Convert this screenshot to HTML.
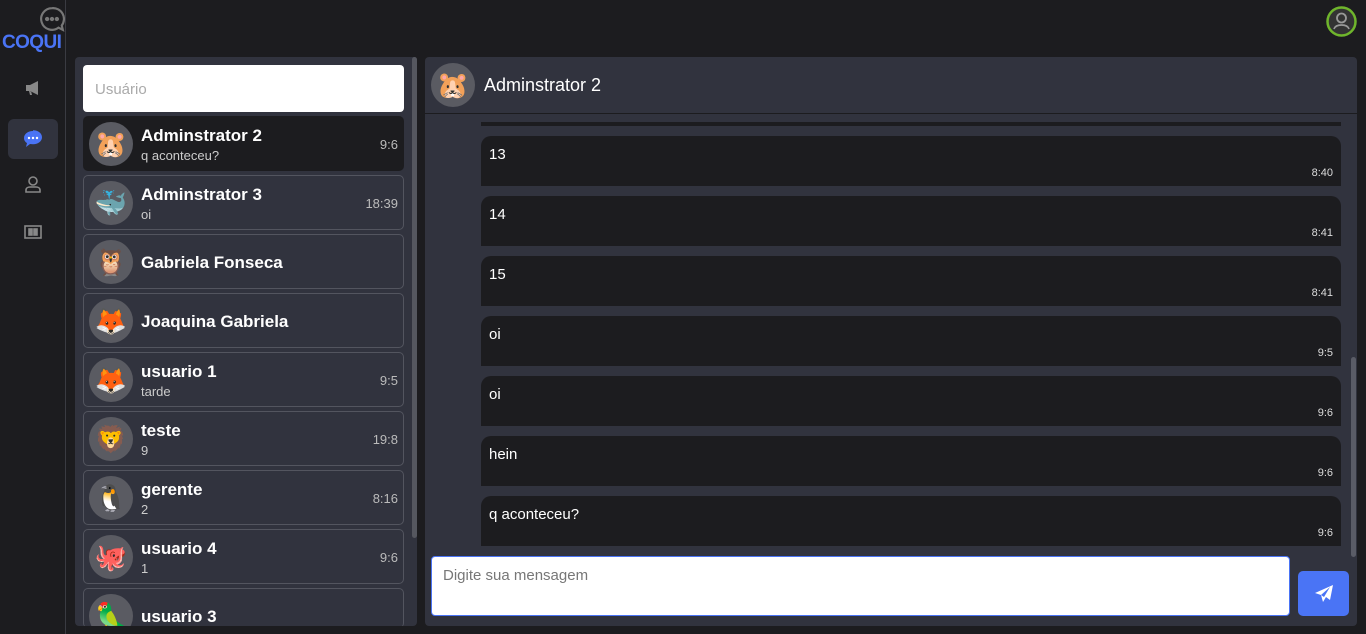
<!DOCTYPE html>
<html><head><style>
*{box-sizing:border-box;margin:0;padding:0}
body{width:1366px;height:634px;background:#1c1c1f;font-family:"Liberation Sans",sans-serif;position:relative;overflow:hidden;color:#fff}
.side{position:absolute;left:0;top:0;width:66px;height:634px;border-right:1px solid #3a3b42}
.logo{position:absolute;left:2px;top:32px;color:#4a74f5;font-weight:bold;font-size:19px;letter-spacing:-0.6px}
.nav{position:absolute;left:8px;width:50px;height:40px;display:flex;align-items:center;justify-content:center}
.panel{position:absolute;background:#31333e;border-radius:4px}
.search{position:absolute;left:83px;top:65px;width:321px;height:47px;background:#fff;border-radius:4px;color:#aaa;font-size:15px;padding:16px 12px}
.row{position:absolute;left:83px;width:321px;height:55px;border:1px solid #53555f;border-radius:5px}
.row.sel{background:#1c1c1f;border-color:#1c1c1f}
.av{position:absolute;left:5px;top:5px;width:44px;height:44px;border-radius:50%;background:#5a5b62;display:flex;align-items:center;justify-content:center;font-size:26px}
.nm{position:absolute;left:57px;top:9px;font-weight:bold;font-size:17px}
.nm.c{top:18px}
.sub{position:absolute;left:57px;top:31px;font-size:13px;color:#ccc}
.tm{position:absolute;right:5px;top:20px;font-size:13px;color:#bbb}
.msg{position:absolute;left:481px;width:860px;height:50px;background:#1c1c1f;border-radius:10px 10px 0 0;font-size:15px;padding:10px 8px}
.msg span{position:absolute;right:8px;bottom:7px;font-size:11px;color:#ddd}
</style></head><body>
<div class="side">
<svg style="position:absolute;left:39px;top:6px" width="26" height="26" viewBox="0 0 24 24" fill="none" stroke="#777" stroke-width="2"><path d="M12 2a10 10 0 1 0 6 18l4 2-1-4A10 10 0 0 0 12 2z"/><circle cx="7.5" cy="12" r="1" fill="#777"/><circle cx="12" cy="12" r="1" fill="#777"/><circle cx="16.5" cy="12" r="1" fill="#777"/></svg>
<div class="logo">COQUI</div>
<div class="nav" style="top:68px"><svg width="18" height="16" viewBox="0 0 18 16"><path d="M2 5h4l8-4v14l-8-4H2z M5 11l1 4h2l-1-4" fill="#888"/></svg></div>
<div class="nav" style="top:119px;background:#31333e;border-radius:6px"><svg width="20" height="18" viewBox="0 0 20 18"><path d="M10 1C5 1 1 4 1 8c0 2 1 4 3 5l-1 4 4-3c1 0 2 .3 3 .3 5 0 9-3 9-7s-4-7-9-7z" fill="#4a74f5"/><circle cx="6" cy="8" r="1.2" fill="#fff"/><circle cx="10" cy="8" r="1.2" fill="#fff"/><circle cx="14" cy="8" r="1.2" fill="#fff"/></svg></div>
<div class="nav" style="top:164px"><svg width="18" height="18" viewBox="0 0 18 18" fill="none" stroke="#888" stroke-width="1.6"><circle cx="9" cy="6" r="4"/><path d="M2 17v-2c0-2 2-3 4-3h6c2 0 4 1 4 3v2z"/></svg></div>
<div class="nav" style="top:212px"><svg width="18" height="14" viewBox="0 0 18 14" fill="none" stroke="#888" stroke-width="1.6"><rect x="1" y="1" width="16" height="12"/><rect x="5" y="4" width="3" height="6" fill="#888"/><rect x="10" y="4" width="3" height="6" fill="#888"/></svg></div>
</div>
<svg style="position:absolute;left:1326px;top:6px" width="31" height="31" viewBox="0 0 31 31"><circle cx="15.5" cy="15.5" r="14" fill="#333" stroke="#6fb52c" stroke-width="2.5"/><circle cx="15.5" cy="12" r="4.5" fill="none" stroke="#999" stroke-width="1.8"/><path d="M8 23c1-3 4-4 7.5-4s6.5 1 7.5 4" fill="none" stroke="#999" stroke-width="1.8"/></svg>

<div class="panel" style="left:75px;top:57px;width:342px;height:569px"></div>
<div style="position:absolute;left:412px;top:57px;width:5px;height:481px;background:#55575f;border-radius:3px"></div>
<div class="search">Usuário</div>
<div class="row sel" style="top:116px"><div class="av">🐹</div><div class="nm">Adminstrator 2</div><div class="sub">q aconteceu?</div><div class="tm">9:6</div></div>
<div class="row" style="top:175px"><div class="av">🐳</div><div class="nm">Adminstrator 3</div><div class="sub">oi</div><div class="tm">18:39</div></div>
<div class="row" style="top:234px"><div class="av">🦉</div><div class="nm c">Gabriela Fonseca</div></div>
<div class="row" style="top:293px"><div class="av">🦊</div><div class="nm c">Joaquina Gabriela</div></div>
<div class="row" style="top:352px"><div class="av">🦊</div><div class="nm">usuario 1</div><div class="sub">tarde</div><div class="tm">9:5</div></div>
<div class="row" style="top:411px"><div class="av">🦁</div><div class="nm">teste</div><div class="sub">9</div><div class="tm">19:8</div></div>
<div class="row" style="top:470px"><div class="av">🐧</div><div class="nm">gerente</div><div class="sub">2</div><div class="tm">8:16</div></div>
<div class="row" style="top:529px"><div class="av">🐙</div><div class="nm">usuario 4</div><div class="sub">1</div><div class="tm">9:6</div></div>
<div class="row" style="top:588px;height:40px;border-bottom:none;overflow:hidden"><div class="av">🦜</div><div class="nm" style="top:18px">usuario 3</div></div>
<div style="position:absolute;left:75px;top:626px;width:342px;height:8px;background:#1c1c1f"></div>

<div class="panel" style="left:425px;top:57px;width:932px;height:569px"></div>
<div style="position:absolute;left:425px;top:113px;width:932px;height:1px;background:#1c1c1f"></div>
<div class="av" style="left:431px;top:63px">🐹</div>
<div style="position:absolute;left:484px;top:75px;font-size:18px">Adminstrator 2</div>
<div style="position:absolute;left:481px;top:122px;width:860px;height:4px;background:#1c1c1f"></div>
<div class="msg" style="top:136px">13<span>8:40</span></div>
<div class="msg" style="top:196px">14<span>8:41</span></div>
<div class="msg" style="top:256px">15<span>8:41</span></div>
<div class="msg" style="top:316px">oi<span>9:5</span></div>
<div class="msg" style="top:376px">oi<span>9:6</span></div>
<div class="msg" style="top:436px">hein<span>9:6</span></div>
<div class="msg" style="top:496px">q aconteceu?<span>9:6</span></div>
<div style="position:absolute;left:1351px;top:357px;width:5px;height:200px;background:#5a5c66;border-radius:3px"></div>
<div style="position:absolute;left:431px;top:556px;width:859px;height:60px;background:#fff;border:1px solid #4a74f5;border-radius:4px;color:#777;font-size:15px;padding:10px 11px">Digite sua mensagem</div>
<div style="position:absolute;left:1298px;top:571px;width:51px;height:45px;background:#4a74f5;border-radius:5px;display:flex;align-items:center;justify-content:center"><svg width="20" height="20" viewBox="0 0 20 20"><path d="M19 1L1 9l6 2 2 7 3-5 4 3z M7 11l9-8-6 10z" fill="#fff"/></svg></div>
</body></html>
